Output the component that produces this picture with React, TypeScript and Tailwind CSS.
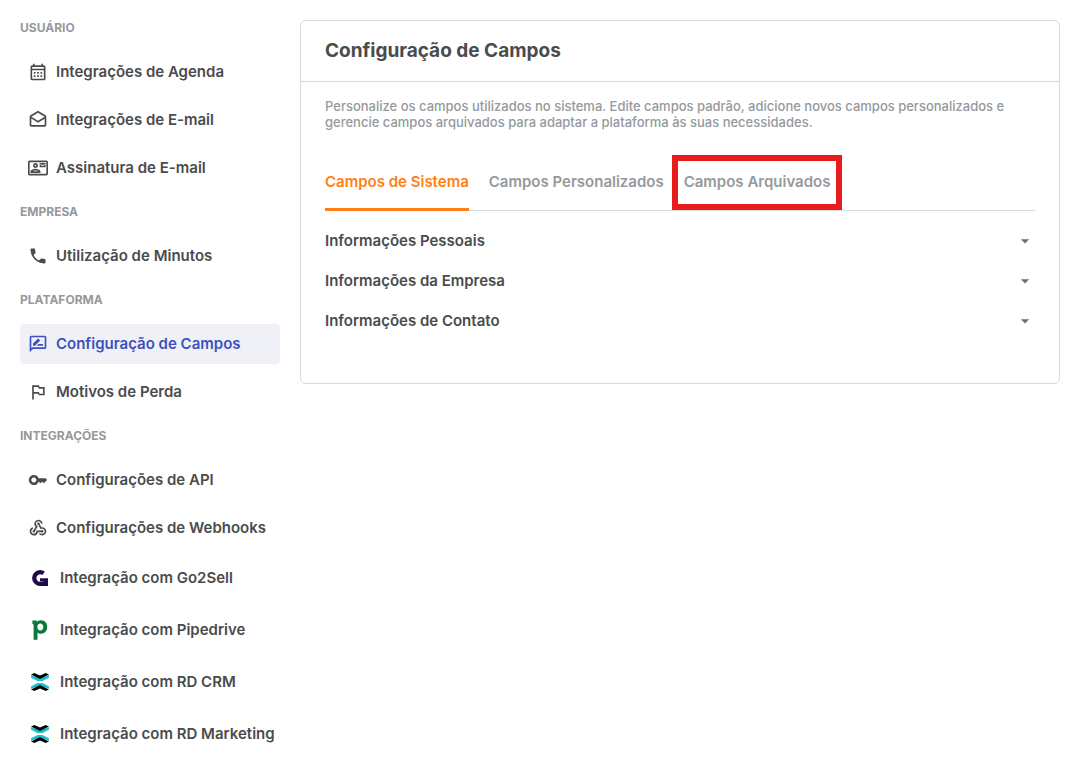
import React, { useState } from 'react';
import {
  MdArrowDropDown,
  MdKey,
  MdOutlineCalendarMonth,
  MdOutlineContactMail,
  MdOutlineDrafts,
  MdOutlinedFlag,
  MdOutlineRateReview,
  MdPhone,
  MdWebhook,
} from 'react-icons/md';

function Go2SellLogo() {
  return (
    <svg viewBox="0 0 24 24" className="size-6 shrink-0" aria-hidden="true">
      <path d="M15.6 7.2A5.9 5.9 0 1 0 12 17.9h4.5" fill="none" stroke="#200a4c" strokeWidth="4.2" />
      <path d="M12 12.2h8V20h-4.600v-4.600H12z" fill="#200a4c" />
    </svg>
  );
}

function PipedriveLogo() {
  return (
    <svg viewBox="0 0 24 24" className="size-6 shrink-0" aria-hidden="true">
      <path
        fillRule="evenodd"
        d="M4.4 2.6h3.3c.8 0 1.2.5 1.4 1.2 1-1 2.3-1.5 3.9-1.5 3.7 0 6.2 2.8 6.2 6.7 0 4-2.7 6.7-6.2 6.7-1.5 0-2.7-.5-3.5-1.3v7.3H5.600V6.900c0-.7-.3-1-.9-1h-.3V2.600zM12.300 5.600c-1.700 0-3 1.200-3 3.400 0 2 1.200 3.400 3 3.400 1.700 0 3-1.300 3-3.400 0-2-1.300-3.400-3-3.400z"
        fill="#087a3b"
      />
    </svg>
  );
}

function RdLogo() {
  return (
    <svg viewBox="0 0 24 24" className="size-6 shrink-0" aria-hidden="true">
      <path d="M3 5.3 12 8l9-2.700v2.400L14.500 11h-5L3 7.700z" fill="#1fc0cf" />
      <path d="M3 4.6 6.3 3 12 5.600 17.700 3 21 4.600 12 8.900z" fill="#050505" />
      <path d="M3 18.700 12 16l9 2.700v-2.400L14.500 13h-5L3 16.300z" fill="#1fc0cf" />
      <path d="M3 19.400 6.300 21 12 18.400 17.700 21 21 19.400 12 15.100z" fill="#050505" />
    </svg>
  );
}

type MenuItem = {
  label: string;
  icon: React.ReactNode;
  active?: boolean;
  logo?: boolean;
};

const ICON = 'size-5 shrink-0';

const MENU: { title: string; items: MenuItem[] }[] = [
  {
    title: 'Usuário',
    items: [
      { label: 'Integrações de Agenda', icon: <MdOutlineCalendarMonth className={ICON} /> },
      { label: 'Integrações de E-mail', icon: <MdOutlineDrafts className={ICON} /> },
      { label: 'Assinatura de E-mail', icon: <MdOutlineContactMail className={ICON} /> },
    ],
  },
  {
    title: 'Empresa',
    items: [{ label: 'Utilização de Minutos', icon: <MdPhone className={ICON} /> }],
  },
  {
    title: 'Plataforma',
    items: [
      { label: 'Configuração de Campos', icon: <MdOutlineRateReview className={ICON} />, active: true },
      { label: 'Motivos de Perda', icon: <MdOutlinedFlag className={ICON} /> },
    ],
  },
  {
    title: 'Integrações',
    items: [
      { label: 'Configurações de API', icon: <MdKey className={ICON} /> },
      { label: 'Configurações de Webhooks', icon: <MdWebhook className={ICON} /> },
      { label: 'Integração com Go2Sell', icon: <Go2SellLogo />, logo: true },
      { label: 'Integração com Pipedrive', icon: <PipedriveLogo />, logo: true },
      { label: 'Integração com RD CRM', icon: <RdLogo />, logo: true },
      { label: 'Integração com RD Marketing', icon: <RdLogo />, logo: true },
    ],
  },
];

const TABS = ['Campos de Sistema', 'Campos Personalizados', 'Campos Arquivados'];
const HIGHLIGHTED_TAB = 'Campos Arquivados';

const SECTIONS = ['Informações Pessoais', 'Informações da Empresa', 'Informações de Contato'];

function Sidebar() {
  return (
    <nav className="w-[260px] shrink-0 pt-1">
      {MENU.map((group) => (
        <section key={group.title}>
          <h2 className="flex h-12 items-center text-xs font-bold uppercase text-[#95999d]">
            {group.title}
          </h2>
          <ul className="flex flex-col gap-2">
            {group.items.map((item) => (
              <li key={item.label}>
                <a
                  href="#"
                  className={`flex items-center gap-2 rounded px-2 text-[15px] font-semibold whitespace-nowrap
                    ${item.logo ? 'h-11' : 'h-10'}
                    ${item.active ? 'bg-[#f0f1f7] text-[#3d50bd]' : 'text-[#4a4b4d] hover:bg-gray-50'}`}
                >
                  {item.icon}
                  {item.label}
                </a>
              </li>
            ))}
          </ul>
        </section>
      ))}
    </nav>
  );
}

export default function App() {
  const [tab, setTab] = useState(TABS[0]);

  return (
    <div className="flex min-h-screen items-start gap-5 bg-white pr-[29px] pl-5 font-['Inter',sans-serif] text-[#4a4b4d]">
      <Sidebar />

      <main className="mt-5 min-w-0 flex-1 rounded-md border border-[#d9d9dd]">
        <header className="flex h-[61px] items-center border-b border-[#d9d9dd] px-6">
          <h1 className="text-[19px] font-bold">Configuração de Campos</h1>
        </header>

        <div className="px-6 pt-4 pb-[42px]">
          <p className="text-[13px] leading-4 font-medium text-[#95999d]">
            Personalize os campos utilizados no sistema. Edite campos padrão, adicione novos campos
            personalizados e gerencie campos arquivados para adaptar a plataforma às suas necessidades.
          </p>

          <div role="tablist" className="mt-6 flex h-[57px] gap-5 border-b border-[#d9d9dd]">
            {TABS.map((name) => (
              <button
                key={name}
                role="tab"
                aria-selected={tab === name}
                onClick={() => setTab(name)}
                className={`relative -mb-px border-b-3 pt-0.5 text-[15px] font-semibold whitespace-nowrap
                  ${tab === name ? 'border-[#ff7f16] text-[#ff7f16]' : 'border-transparent text-[#95999d]'}`}
              >
                {name}
                {name === HIGHLIGHTED_TAB && (
                  <span className="pointer-events-none absolute -inset-x-3 top-px -bottom-0.5 border-6 border-[#e81c1c]" />
                )}
              </button>
            ))}
          </div>

          <div className="pt-2.5">
            {SECTIONS.map((section) => (
              <button
                key={section}
                aria-expanded={false}
                className="flex h-10 w-full items-center justify-between text-left text-[15px] font-semibold"
              >
                {section}
                <MdArrowDropDown className="size-5 text-[#6b6e72]" />
              </button>
            ))}
          </div>
        </div>
      </main>
    </div>
  );
}
